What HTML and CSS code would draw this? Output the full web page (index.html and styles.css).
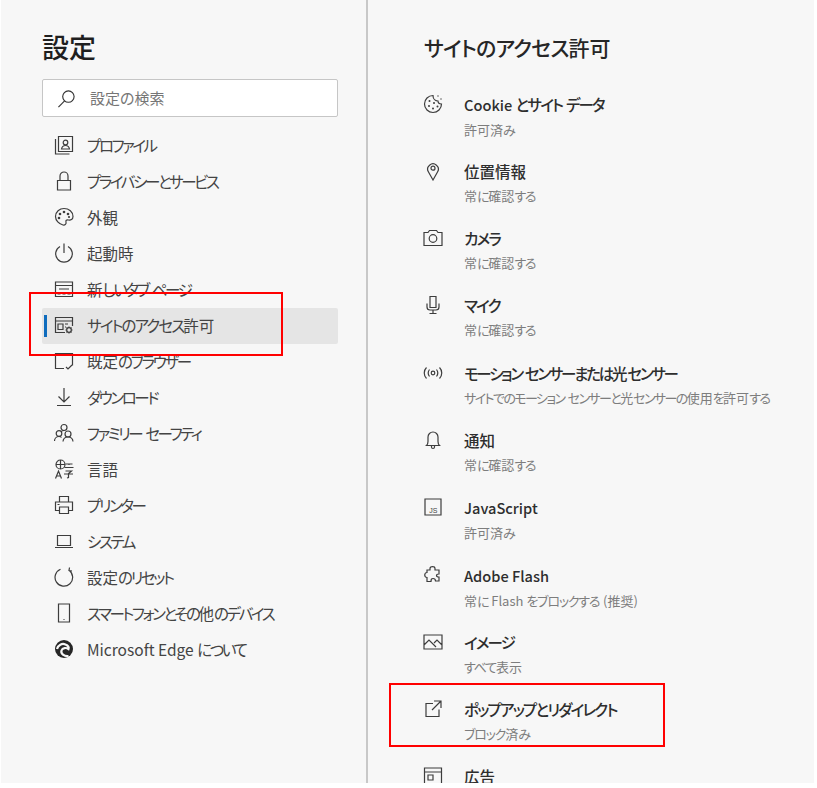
FILE: index.html
```html
<!DOCTYPE html>
<html lang="ja">
<head>
<meta charset="utf-8">
<title>設定</title>
<link rel="stylesheet" href="styles.css">
</head>
<body>
<div class="page">
  <aside class="side">
    <h1 class="side-title">設定</h1>
    <div class="search">
      <svg class="search-icon" viewBox="0 0 20 20"><circle cx="12" cy="8" r="6"/><path d="M8 12.500 1.500 19"/></svg>
      <span class="search-text">設定の検索</span>
    </div>
    <nav class="nav">
      <a class="nav-item"><svg class="ico" viewBox="0 0 20 20"><path d="M4.500 1.500h14v15h-14zM1.500 4v15h14"/><circle cx="11.500" cy="7.500" r="2.300"/><path d="M7.500 14c.5-2.500 2-3.500 4-3.500s3.500 1 4 3.500z"/></svg><span>プロファイル</span></a>
      <a class="nav-item"><svg class="ico" viewBox="0 0 20 20"><path d="M3.500 9.500h13v9.500h-13zM6 9.500V5a4 4 0 0 1 8 0v4.500"/></svg><span>プライバシーとサービス</span></a>
      <a class="nav-item"><svg class="ico" viewBox="0 0 20 20"><path d="M10 1.500c5 0 9 3.500 9 8 0 3-2.500 4-4.500 3.500-2-.5-3 .5-2.500 2 .5 2-1 3.500-3 3-4-1-7.500-4.500-7.500-8.500 0-4.500 4-8 8.500-8z"/><g class="fill"><circle cx="6" cy="7" r="1.300"/><circle cx="10" cy="5" r="1.300"/><circle cx="14" cy="7" r="1.300"/><circle cx="5" cy="11" r="1.300"/><circle cx="15" cy="10" r="1.100"/></g></svg><span class="w">外観</span></a>
      <a class="nav-item"><svg class="ico" viewBox="0 0 20 20"><path d="M10 .5v9.500M6 3.500a8.300 8.300 0 1 0 8 0"/></svg><span class="w">起動時</span></a>
      <a class="nav-item"><svg class="ico" viewBox="0 0 20 20"><path d="M1.500 3h17v14.500h-17zM1.500 6.500h17M5 10h10"/><path class="dots" d="M3.500 14h3v1.500h-3zM8.500 14h3v1.500h-3zM13.500 14h3v1.500h-3z"/></svg><span><span class="w">新</span>しいタブ ページ</span></a>
      <a class="nav-item active"><svg class="ico" viewBox="0 0 20 20"><path d="M11 17.500H1.500v-15h17V11M1.500 6h17M4 9h5v5.500H4zM11 9h3M11 12h1"/><circle cx="15" cy="15" r="2.300"/><path d="M15 11.500v1.200M15 17.300v1.200M11.500 15h1.200M17.300 15h1.200M12.500 12.500l.8.800M16.700 16.700l.8.800M12.500 17.500l.8-.8M16.700 13.300l.8-.8"/></svg><span class="roomy">サイトのアクセス<span class="w">許可</span></span></a>
      <a class="nav-item"><svg class="ico" viewBox="0 0 20 20"><path d="M10 17.500H1.500v-15h17v12M12 16l2 2 4-4"/></svg><span><span class="w">既定</span>のブラウザー</span></a>
      <a class="nav-item"><svg class="ico" viewBox="0 0 20 20"><path d="M10 1v14M4.500 9.500l5.500 5.500 5.500-5.500M3 18.500h14"/></svg><span>ダウンロード</span></a>
      <a class="nav-item"><svg class="ico" viewBox="0 0 20 20"><circle cx="10" cy="4.500" r="3"/><circle cx="5" cy="10.500" r="2.800"/><circle cx="14" cy="11" r="3"/><path d="M.5 18c0-2.500 2-4.500 4.500-4.500 1 0 2 .3 2.500 1M9 18.500c.2-2.500 2.300-4.500 5-4.500s4.800 2 5 4.500M7 9c.5-1 1.500-1.500 3-1.500"/></svg><span>ファミリー セーフティ</span></a>
      <a class="nav-item"><svg class="ico" viewBox="0 0 20 20"><circle cx="6.500" cy="5.500" r="4.500"/><path d="M2 5.500h9M6.500 1v9"/><path d="M1.500 19.500l3-7.500 3 7.500M2.500 17h4M11.500 5h7M10.500 8.500h9M15 5v1M11.500 12h6l-3 2.500v4l-1.500.5M10 15h9"/></svg><span class="w">言語</span></a>
      <a class="nav-item"><svg class="ico" viewBox="0 0 20 20"><path d="M5.500 7V1.500h9V7M5.500 15.500h-4V7h17v8.500h-4M5.500 12h9v6.500h-9zM3.500 9.500h2"/></svg><span>プリンター</span></a>
      <a class="nav-item"><svg class="ico" viewBox="0 0 20 20"><path d="M3.500 4.500h13v10h-13zM1 16.500h18"/></svg><span>システム</span></a>
      <a class="nav-item"><svg class="ico" viewBox="0 0 20 20"><path d="M6.500 2.200a8.800 8.800 0 1 0 8.500 1M15.500 .5l-.5 3 3 .5"/></svg><span><span class="w">設定</span>のリセット</span></a>
      <a class="nav-item"><svg class="ico" viewBox="0 0 20 20"><path d="M4.500 1h11v18h-11z"/><path d="M9.500 16.500h1"/></svg><span>スマートフォンとその<span class="w">他</span>のデバイス</span></a>
      <a class="nav-item"><svg class="ico" viewBox="0 0 20 20"><circle class="solid" cx="10" cy="10" r="9"/><path class="swirl" d="M3 10c1-4 5-6 8.500-4.500 2.500 1 3.500 3 3 4.500-2-1.500-6-1.500-7 1.500-1 3 2.500 6 7 5.500"/></svg><span><span class="w">Microsoft Edge </span>について</span></a>
    </nav>
  </aside>
  <main class="main">
    <h2 class="main-title">サイトのアクセス<span class="w">許可</span></h2>
    <ul class="perms">
      <li class="perm"><svg class="pico" viewBox="0 0 20 20"><path d="M10 1.500a8.500 8.500 0 1 0 8.500 8.500c-2 0-3.500-1-3.500-3-2.500 0-5-2-5-5.500z"/><g class="fill"><circle cx="6.500" cy="7" r="1"/><circle cx="11" cy="9" r="1"/><circle cx="6" cy="12" r="1"/><circle cx="10" cy="14.500" r="1"/><circle cx="14.500" cy="12.500" r="1"/><circle cx="15" cy="2" r=".7"/><circle cx="18" cy="5" r=".7"/></g></svg><div><div class="p-name"><span class="lat">Cookie </span>とサイト データ</div><div class="p-val"><span class="w">許可済</span>み</div></div></li>
      <li class="perm"><svg class="pico" viewBox="0 0 20 20"><path d="M10 19 5.500 11a5.300 5.300 0 1 1 9 0z"/><circle cx="10" cy="7.200" r="2"/></svg><div><div class="p-name"><span class="w">位置情報</span></div><div class="p-val"><span class="w">常</span>に<span class="w">確認</span>する</div></div></li>
      <li class="perm"><svg class="pico" viewBox="0 0 20 20"><path d="M1 4.500h4l1.500-2h7l1.500 2h4v13H1z"/><circle cx="10" cy="10.500" r="3.800"/></svg><div><div class="p-name">カメラ</div><div class="p-val"><span class="w">常</span>に<span class="w">確認</span>する</div></div></li>
      <li class="perm"><svg class="pico" viewBox="0 0 20 20"><path d="M7 1.500h6v11H7zM4 8.500v3.500a3 3 0 0 0 3 3h6a3 3 0 0 0 3-3V8.500M10 15v3M6.500 18.500h7"/></svg><div><div class="p-name">マイク</div><div class="p-val"><span class="w">常</span>に<span class="w">確認</span>する</div></div></li>
      <li class="perm"><svg class="pico" viewBox="0 0 20 20"><circle cx="10" cy="10" r="1.800"/><path d="M6.500 6.500c-1.500 2-1.500 5 0 7M13.500 6.500c1.500 2 1.500 5 0 7M3.500 4.500c-3 3-3 8 0 11M16.500 4.500c3 3 3 8 0 11"/></svg><div><div class="p-name tight">モーション センサーまたは<span class="w">光</span>センサー</div><div class="p-val tight">サイトでのモーション センサーと<span class="w">光</span>センサーの<span class="w">使用</span>を<span class="w">許可</span>する</div></div></li>
      <li class="perm"><svg class="pico" viewBox="0 0 20 20"><path d="M3.500 15.500c1-1 1.500-2 1.500-4V7a5 5 0 0 1 10 0v4.500c0 2 .5 3 1.500 4zM8.500 15.500v1.500a1.500 1.500 0 0 0 3 0v-1.500"/></svg><div><div class="p-name"><span class="w">通知</span></div><div class="p-val"><span class="w">常</span>に<span class="w">確認</span>する</div></div></li>
      <li class="perm"><svg class="pico" viewBox="0 0 20 20"><path d="M2 2h16v16H2z"/><text class="js" x="14.500" y="15.500" text-anchor="end">JS</text></svg><div><div class="p-name"><span class="lat">JavaScript</span></div><div class="p-val"><span class="w">許可済</span>み</div></div></li>
      <li class="perm"><svg class="pico" viewBox="0 0 20 20"><path d="M7 3.500c0-2.500 5-2.500 5 0 0 1 0 1.500 0 1.500h4v4c-1 0-2.500 0-2.500 1.500s1 1.500 2.500 1.500v4h-3.500c0-2-1-2.500-2.500-2.500S8 14 8 16.500H4v-4c-3 0-3-5 0-5V5h3z"/></svg><div><div class="p-name"><span class="lat">Adobe Flash</span></div><div class="p-val"><span class="w">常</span>に<span class="w"> Flash </span>をブロックする <span class="w">(推奨)</span></div></div></li>
      <li class="perm"><svg class="pico" viewBox="0 0 20 20"><path d="M1 3h18v14H1zM1 13l5-5 7 7M11 11l3-3 5 5"/></svg><div><div class="p-name">イメージ</div><div class="p-val">すべて<span class="w">表示</span></div></div></li>
      <li class="perm"><svg class="pico" viewBox="0 0 20 20"><path d="M10 4.500H3v13h13v-7M11 2h7v7M18 2 9 11"/></svg><div><div class="p-name">ポップアップとリダイレクト</div><div class="p-val">ブロック<span class="w">済</span>み</div></div></li>
      <li class="perm"><svg class="pico" viewBox="0 0 20 20"><path d="M1.500 2h17v16h-17zM1.500 6h17M5 9h5v5H5z"/></svg><div><div class="p-name"><span class="w">広告</span></div></div></li>
    </ul>
  </main>
  <div class="mark mark-a"></div>
  <div class="mark mark-b"></div>
</div>
</body>
</html>
```
FILE: styles.css
```css
* { box-sizing: border-box; }
html, body { margin: 0; height: 100%; overflow: hidden; }
body {
  background: #fff;
  color: #2b2b2b;
  font-family: "Noto Sans CJK JP", "Noto Sans", sans-serif;
  font-feature-settings: "palt";
}
svg { fill: none; stroke: #3d3d3d; stroke-width: 1.2; flex: none; }
.fill, .dots { fill: #3d3d3d; stroke: none; }
.solid { fill: #262626; stroke: none; }
.swirl { stroke: #f7f7f7; stroke-width: 2.200; }
.w { letter-spacing: 0; word-spacing: 0; }
.page {
  position: relative;
  display: flex;
  width: 813px;
  height: 783px;
  margin-left: 1px;
  background: #f7f7f7;
  overflow: hidden;
}
.side {
  width: 367px;
  flex: none;
  padding: 28px 28px 0 41px;
  border-right: 2px solid #c8c8c8;
}
.side-title {
  margin: 0;
  font-size: 27px;
  line-height: 38px;
  font-weight: 500;
  color: #1f1f1f;
}
.search {
  display: flex;
  align-items: center;
  height: 38px;
  margin-top: 13px;
  padding-left: 14px;
  background: #fff;
  border: 1px solid #c6c6c6;
  border-radius: 2px;
}
.search-icon { width: 19px; height: 19px; stroke: #333; }
.search-text { margin: -2px 0 0 14px; font-size: 15px; color: #767676; }
.nav { margin-top: 11px; }
.nav-item {
  position: relative;
  display: flex;
  align-items: center;
  height: 36px;
  padding: 0 0 2px 12px;
  font-size: 15.500px;
  letter-spacing: -2.400px;
  word-spacing: 3px;
  color: #444;
}
.roomy { letter-spacing: -1.900px; }
.ico { width: 20px; height: 20px; margin-right: 13px; }
.active { background: #e5e5e5; border-radius: 2px; }
.active::before {
  content: "";
  position: absolute;
  left: 2px;
  top: 7px;
  bottom: 7px;
  width: 3px;
  background: #0f6cbd;
}
.main { flex: 1; padding: 31px 0 0 56px; }
.main-title {
  margin: 0;
  font-size: 21px;
  line-height: 32px;
  font-weight: 500;
  letter-spacing: -.8px;
  color: #262626;
}
.perms { list-style: none; margin: 27.500px 0 0; padding: 0; }
.perm { display: flex; height: 67.300px; }
.pico { width: 20px; height: 20px; margin: 3px 21px 0 -1px; }
.p-name {
  font-size: 15.500px;
  line-height: 26px;
  font-weight: 500;
  letter-spacing: -1.800px;
  word-spacing: 2px;
  color: #2e2e2e;
}
.lat { font-size: 14.600px; letter-spacing: 0; word-spacing: 0; }
.p-val {
  margin-top: -1px;
  font-size: 13px;
  line-height: 26px;
  letter-spacing: -1.200px;
  word-spacing: 2px;
  color: #7d7d7d;
}
.p-name.tight { letter-spacing: -2.300px; }
.p-val.tight { letter-spacing: -1.600px; }
.js { font-size: 7px; font-family: "Liberation Sans", sans-serif; fill: #444; stroke: none; }
.mark { position: absolute; border: 2px solid #f00; pointer-events: none; }
.mark-a { left: 28px; top: 292px; width: 254px; height: 64px; }
.mark-b { left: 388px; top: 683px; width: 276px; height: 64px; }
```
